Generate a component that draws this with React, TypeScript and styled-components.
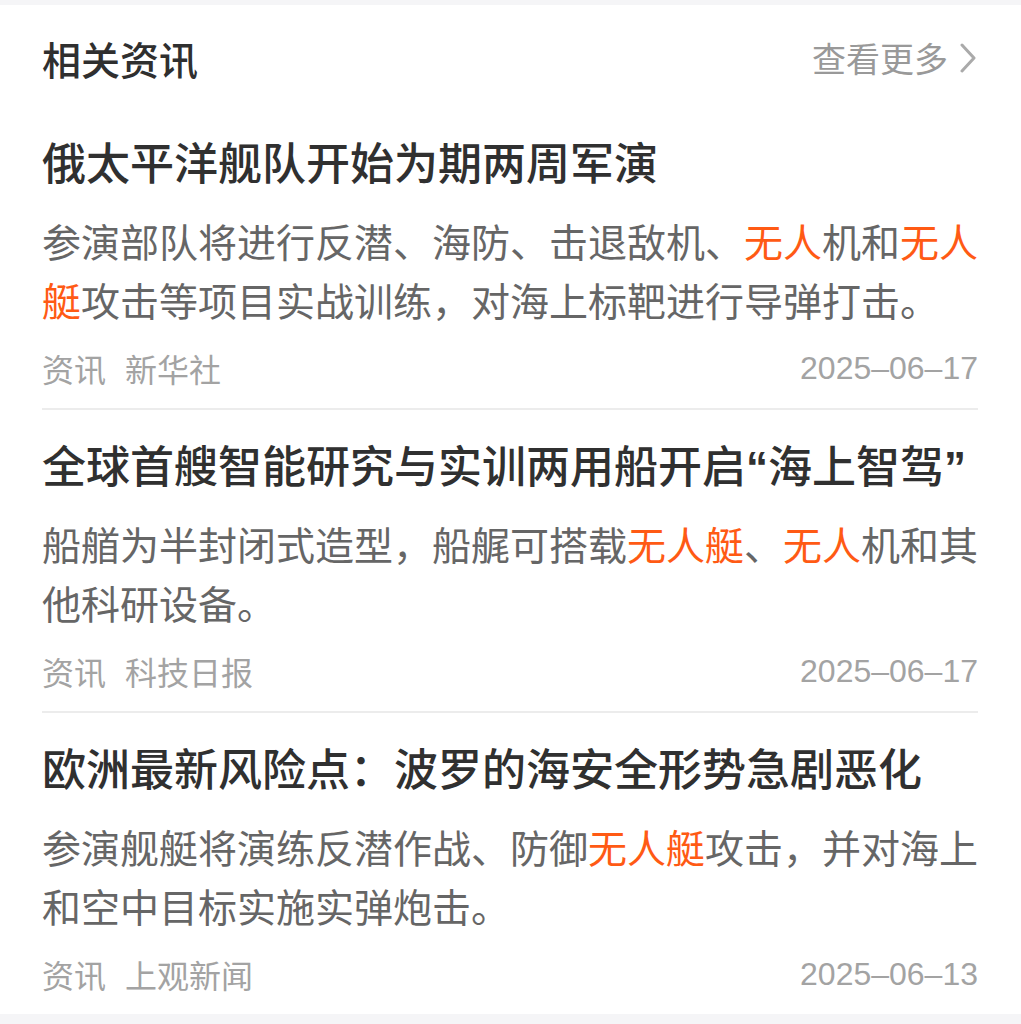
import styled, { createGlobalStyle } from "styled-components";

const GlobalStyle = createGlobalStyle`
  html, body {
    margin: 0;
    padding: 0;
    background: #f5f5f7;
    overflow: hidden;
  }
  body {
    font-family: "Noto Sans CJK SC", "Noto Sans", sans-serif;
  }
`;

interface NewsItem {
  title: string;
  body: { text: string; hot?: boolean }[];
  source: string;
  date: string;
}

const news: NewsItem[] = [
  {
    title: "俄太平洋舰队开始为期两周军演",
    body: [
      { text: "参演部队将进行反潜、海防、击退敌机、" },
      { text: "无人", hot: true },
      { text: "机和" },
      { text: "无人艇", hot: true },
      { text: "攻击等项目实战训练，对海上标靶进行导弹打击。" },
    ],
    source: "新华社",
    date: "2025-06-17",
  },
  {
    title: "全球首艘智能研究与实训两用船开启“海上智驾”",
    body: [
      { text: "船艏为半封闭式造型，船艉可搭载" },
      { text: "无人艇", hot: true },
      { text: "、" },
      { text: "无人", hot: true },
      { text: "机和其他科研设备。" },
    ],
    source: "科技日报",
    date: "2025-06-17",
  },
  {
    title: "欧洲最新风险点：波罗的海安全形势急剧恶化",
    body: [
      { text: "参演舰艇将演练反潜作战、防御" },
      { text: "无人艇", hot: true },
      { text: "攻击，并对海上和空中目标实施实弹炮击。" },
    ],
    source: "上观新闻",
    date: "2025-06-13",
  },
];

const Card = styled.section`
  margin-top: 5px;
  background: #ffffff;
  padding: 0 40px 0 42px;
`;

const Header = styled.header`
  display: flex;
  align-items: center;
  justify-content: space-between;
  padding-top: 33px;
  height: 40px;
  margin-bottom: 29px;
`;

const Heading = styled.h2`
  margin: 0;
  font-size: 39px;
  line-height: 40px;
  font-weight: 500;
  color: #2f2f2f;
`;

const More = styled.a`
  display: flex;
  align-items: center;
  gap: 12px;
  font-size: 34px;
  line-height: 40px;
  color: #999999;
  margin-right: 5px;
`;

const Item = styled.article<{ $last?: boolean }>`
  padding: 24px 0 20px;
  margin-right: 3px;
  border-bottom: ${(p) => (p.$last ? "none" : "2px solid #ececec")};
`;

const Title = styled.h3`
  margin: 0;
  height: 60px;
  font-size: 44px;
  line-height: 60px;
  font-weight: 500;
  color: #303030;
  white-space: nowrap;
  overflow: hidden;
  text-overflow: ellipsis;
`;

const Quote = styled.span`
  font-family: "Liberation Sans", sans-serif;
  font-weight: 700;
  line-height: 0;
`;

const Body = styled.p`
  margin: 20px -3px 0 0;
  font-size: 39px;
  line-height: 59px;
  color: #666666;
`;

const Hot = styled.span`
  color: #ff5a14;
`;

const Meta = styled.div`
  display: flex;
  align-items: center;
  justify-content: space-between;
  margin-top: 19px;
  height: 40px;
  color: #a3a3a3;
`;

const Tags = styled.div`
  display: flex;
  gap: 19px;
  font-size: 32px;
  line-height: 40px;
`;

const DateText = styled.span`
  font-family: "Liberation Sans", "Noto Sans", sans-serif;
  font-size: 32px;
  line-height: 40px;
  color: #a3a3a3;
`;

const Chevron = () => (
  <svg width="16" height="30" viewBox="0 0 16 30" fill="none">
    <polyline
      points="2,2 14,15 2,28"
      stroke="#aaaaaa"
      strokeWidth="3"
      strokeLinecap="round"
      strokeLinejoin="round"
    />
  </svg>
);

// render curly quotes in a Latin face so they stay narrow, as in the app
const renderTitle = (title: string) =>
  title.split(/([“”])/).map((part, i) =>
    part === "“" || part === "”" ? <Quote key={i}>{part}</Quote> : part
  );

const App = () => {
  return (
    <>
      <GlobalStyle />
      <Card>
        <Header>
          <Heading>相关资讯</Heading>
          <More>
            查看更多
            <Chevron />
          </More>
        </Header>
        {news.map((n, i) => (
          <Item key={n.title} $last={i === news.length - 1}>
            <Title>{renderTitle(n.title)}</Title>
            <Body>
              {n.body.map((part, j) =>
                part.hot ? <Hot key={j}>{part.text}</Hot> : <span key={j}>{part.text}</span>
              )}
            </Body>
            <Meta>
              <Tags>
                <span>资讯</span>
                <span>{n.source}</span>
              </Tags>
              <DateText>{n.date.replace(/-/g, "–")}</DateText>
            </Meta>
          </Item>
        ))}
      </Card>
    </>
  );
};

export default App;
